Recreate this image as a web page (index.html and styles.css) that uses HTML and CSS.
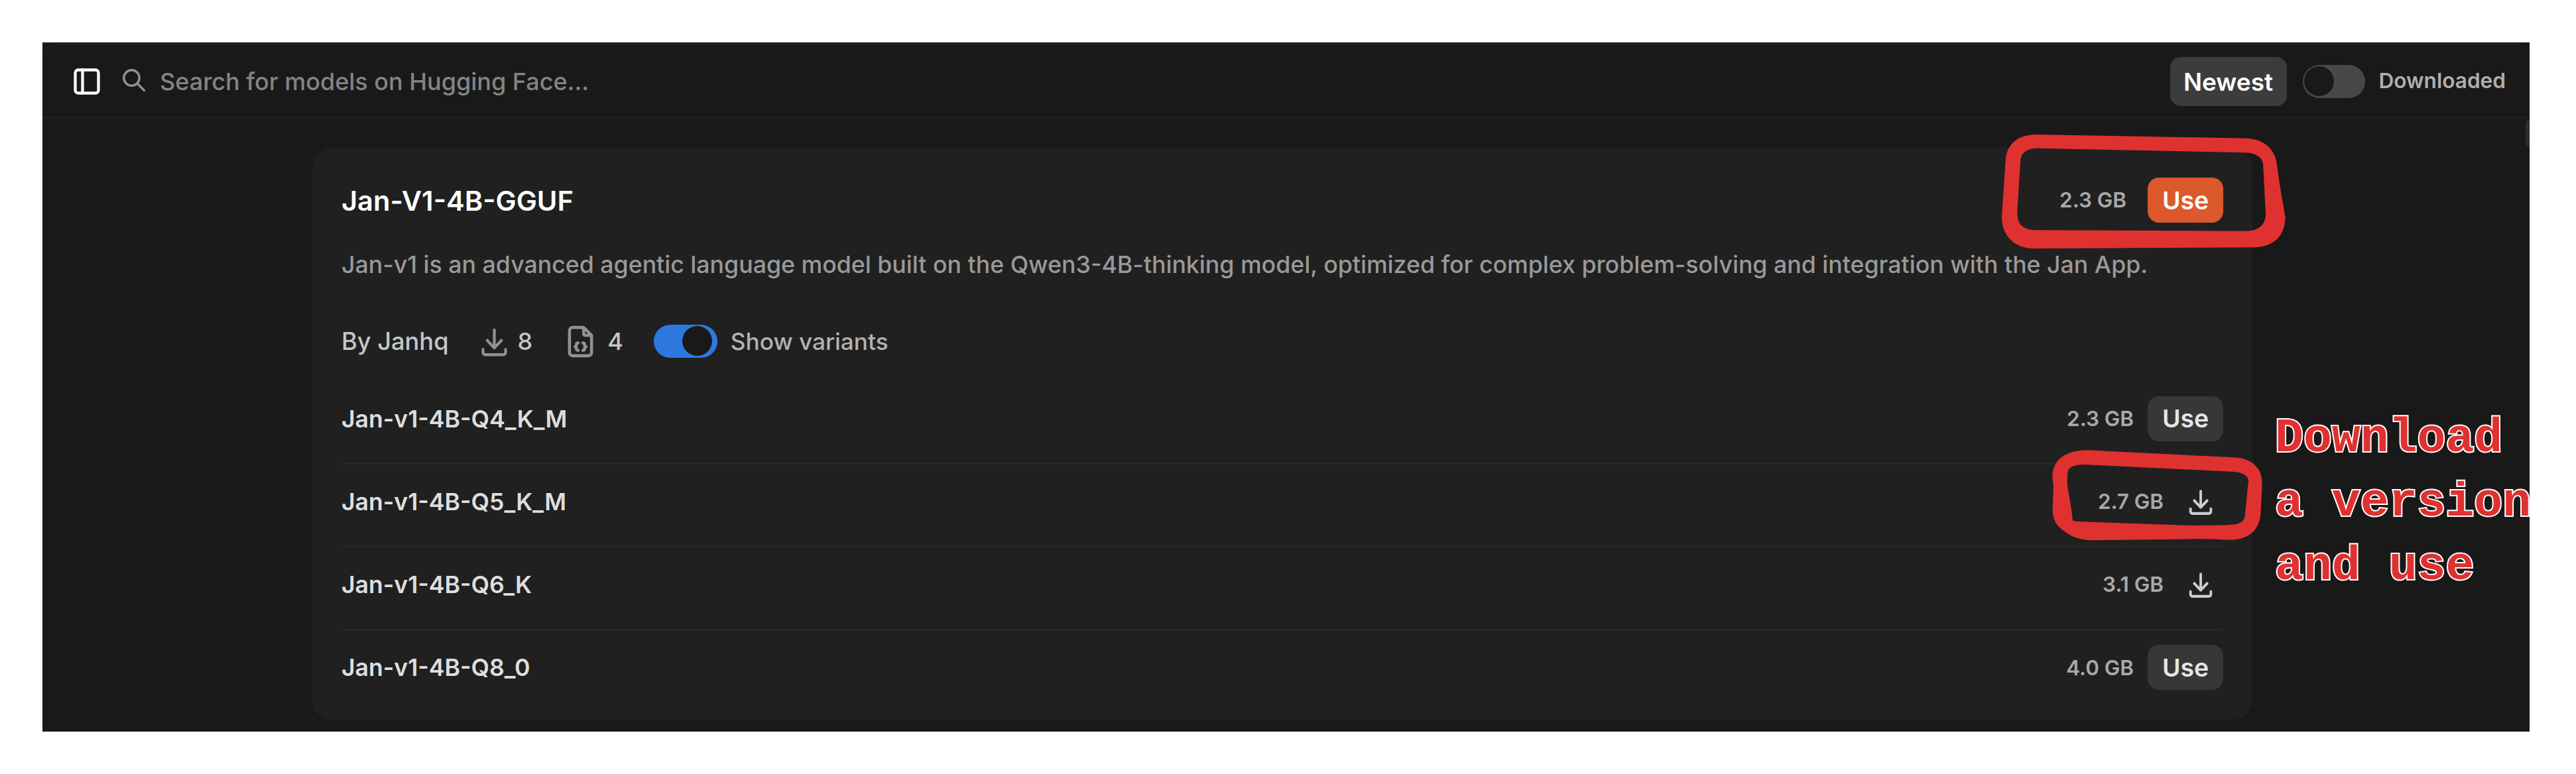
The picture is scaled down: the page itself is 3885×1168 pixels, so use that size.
FILE: index.html
```
<!DOCTYPE html>
<html lang="en">
<head>
<meta charset="utf-8">
<title>Jan Hub</title>
<link rel="stylesheet" href="styles.css">
</head>
<body>
<svg class="defs" width="0" height="0">
  <symbol id="download" viewBox="0 0 24 24" preserveAspectRatio="none">
    <path d="M4 17v2a1.5 1.5 0 0 0 1.500 1.500h13a1.500 1.500 0 0 0 1.500-1.500v-2M7 11l5 5l5-5M12 4v12"/>
  </symbol>
</svg>
<div class="window">
  <header class="header">
    <svg class="icon-panel" viewBox="0 0 40 40"><rect x="2.500" y="2.500" width="35" height="35" rx="4.500"/><path d="M13.500 2.500v35"/></svg>
    <svg class="icon-search" viewBox="0 0 34 34"><circle cx="13.500" cy="13.500" r="11.700"/><path d="M22 22l10.500 10.500"/></svg>
    <div class="search">Search for models on Hugging Face...</div>
    <button class="sort">Newest</button>
    <span class="switch"><span class="thumb"></span></span>
    <span class="filter-label">Downloaded</span>
  </header>
  <main class="content">
    <section class="card">
      <div class="card-head">
        <h1 class="title">Jan-V1-4B-GGUF</h1>
        <span class="size">2.3 GB</span>
        <button class="use primary">Use</button>
      </div>
      <p class="description">Jan-v1 is an advanced agentic language model built on the Qwen3-4B-thinking model, optimized for complex problem-solving and integration with the Jan App.</p>
      <div class="meta">
        <span class="author">By Janhq</span>
        <svg class="icon-count"><use href="#download"/></svg>
        <span class="downloads">8</span>
        <svg class="icon-file" viewBox="0 0 24 24"><path d="M14 3v4a1 1 0 0 0 1 1h4M17 21H7a2 2 0 0 1-2-2V5a2 2 0 0 1 2-2h7l5 5v11a2 2 0 0 1-2 2zM10.500 12.800q-1.200 0-1.100 1.200q0 1-.9 1.200q.9.200.9 1.200q-.1 1.200 1.100 1.200M13.500 12.800q1.200 0 1.100 1.200q0 1 .9 1.200q-.9.200-.9 1.200q.1 1.200-1.100 1.200"/></svg>
        <span class="files">4</span>
        <span class="switch on"><span class="thumb"></span></span>
        <span class="variants-label">Show variants</span>
      </div>
      <ul class="variants">
        <li class="variant"><span class="name">Jan-v1-4B-Q4_K_M</span><span class="size">2.3 GB</span><button class="use">Use</button></li>
        <li class="variant"><span class="name">Jan-v1-4B-Q5_K_M</span><span class="size">2.7 GB</span><svg class="icon-get"><use href="#download"/></svg></li>
        <li class="variant"><span class="name">Jan-v1-4B-Q6_K</span><span class="size">3.1 GB</span><svg class="icon-get"><use href="#download"/></svg></li>
        <li class="variant"><span class="name">Jan-v1-4B-Q8_0</span><span class="size">4.0 GB</span><button class="use">Use</button></li>
      </ul>
    </section>
  </main>
  <div class="scrollbar"></div>
  <!-- Hand-drawn rings around the two actions -->
  <svg class="marks" viewBox="64 64 3751 1040">
    <path transform="translate(2980 180) scale(.33333)" d="M275 69L1225 86C1310 90 1355 140 1362 205C1370 280 1388 370 1400 445C1398 520 1355 580 1255 580L262 585C165 583 118 520 117 445L134 185C140 110 190 70 275 69ZM275 131L1215 151C1265 152 1300 170 1300 215L1311 430C1310 485 1270 507 1220 506L275 502C215 500 187 480 187 420L201 190C203 150 230 132 275 131Z"/>
    <path transform="translate(3080 670) scale(.33333)" d="M203 28L870 61C960 66 996 120 995 180L988 320C980 400 920 434 850 434Q770 430 690 430L230 436C170 436 130 420 98 394C65 370 46 345 47 290L51 185C45 160 46 145 47 130C58 60 120 29 203 28ZM190 93L860 125C910 128 934 145 933 168L917 325C915 355 885 365 840 367Q760 369 680 369L180 352C150 350 137 350 137 342C133 290 118 220 113 180L115 130C118 102 145 94 190 93Z"/>
  </svg>
  <div class="note">Download<br>a version<br>and use</div>
</div>
</body>
</html>
```
FILE: styles.css
```
* { box-sizing: border-box; }

body {
  margin: 0;
  padding: 64px 70px 64px 64px;
  background: #fff;
  font-family: Inter, sans-serif;
  font-size: 36px;
  line-height: 44px;
}

button {
  border: 0;
  padding: 0;
  font-family: inherit;
  font-weight: 600;
}

svg {
  fill: none;
  stroke-linecap: round;
  stroke-linejoin: round;
  flex: none;
}

.defs { display: none; }

.window {
  position: relative;
  display: flow-root;
  height: 1040px;
  overflow: hidden;
  background: #191919;
}

.header {
  display: flex;
  align-items: center;
  height: 113px;
  margin-top: 2px;
  padding: 2px 36px 0 47px;
  border-top: 2px solid #202020;
  border-bottom: 3px solid #1f1f1f;
  border-radius: 20px 20px 0 0;
}

.icon-panel { width: 40px; height: 40px; stroke: #fff; stroke-width: 4.3; }
.icon-search { width: 34px; height: 34px; margin: -4px 0 0 34px; stroke: #929292; stroke-width: 3.4; }
.search { flex: 1; margin-left: 22px; font-size: 35.98px; font-weight: 500; color: #848484; }

.sort {
  width: 176px;
  height: 74px;
  border-radius: 16px;
  background: #3c3c3c;
  color: #fff;
  font-size: 37px;
}

.switch {
  display: flex;
  width: 94px;
  height: 50px;
  margin-left: 24px;
  padding: 2px;
  border-radius: 25px;
  background: #484848;
}

.thumb { width: 45px; height: 45px; border-radius: 50%; background: #191919; }
.filter-label { margin: -3px 0 0 21px; font-size: 31.6px; font-weight: 600; color: #afafaf; }

.card {
  width: 2926px;
  height: 863px;
  margin: 44px 0 0 407px;
  padding: 45px 44px 0;
  border-radius: 30px;
  background: #202020;
}

.card-head { display: flex; align-items: center; height: 68px; }
.title { flex: 1; margin: 1px 0 0; font-size: 41.6px; font-weight: 600; color: #fff; }
.size { margin-top: -1px; font-size: 31.4px; font-weight: 600; color: #a9a9a9; }

.use {
  width: 114px;
  height: 68px;
  margin-left: 32px;
  border-radius: 17px;
  background: #373737;
  color: #e6e6e6;
  font-size: 37.4px;
}

.use.primary { background: #db592c; color: #fff; }

.description { margin: 41px 0 0; font-size: 35.7px; font-weight: 500; color: #999; white-space: nowrap; }

.meta { display: flex; align-items: center; height: 50px; margin-top: 69px; font-weight: 500; color: #c6c6c6; }
.author { font-size: 36.2px; }
.icon-count { width: 51px; height: 54px; margin: 2px 0 0 43px; stroke: #929292; stroke-width: 2; }
.downloads { margin-left: 10px; }
.icon-file { width: 57px; height: 57px; margin-left: 44px; stroke: #929292; stroke-width: 1.9; }
.files { margin-left: 12px; }
.switch.on { width: 96px; margin-left: 46px; padding-right: 8px; justify-content: flex-end; background: #2d79e0; }
.variants-label { margin-left: 20px; font-size: 35.2px; color: #b2b2b2; }

.variants { margin: 36px 0 0; padding: 0; list-style: none; }
.variant { display: flex; align-items: center; height: 125.2px; padding-bottom: 11px; border-bottom: 3px solid #272727; }
.variant:last-child { border-bottom-color: transparent; }
.name { flex: 1; margin-top: 2px; font-size: 35.6px; font-weight: 600; color: #dedede; }
.variant .use { margin-left: 21px; }
.variant .size { margin-top: 1px; }
.icon-get { width: 46px; height: 49px; margin: 2px 11px 0 33px; stroke: #cdcdcd; stroke-width: 2; }

.scrollbar {
  position: absolute;
  top: 116px;
  right: -8px;
  width: 14px;
  height: 42px;
  border-radius: 7px;
  background: #2c2c2c;
}

.marks { position: absolute; inset: 0; width: 100%; height: 100%; fill: #e03131; fill-rule: evenodd; }

.note {
  position: absolute;
  left: 3367px;
  top: 550px;
  font: bold 71.5px/96.7px "Liberation Mono", monospace;
  color: #e03131;
  -webkit-text-stroke: 4px #fff;
  paint-order: stroke fill;
  white-space: nowrap;
}
```
